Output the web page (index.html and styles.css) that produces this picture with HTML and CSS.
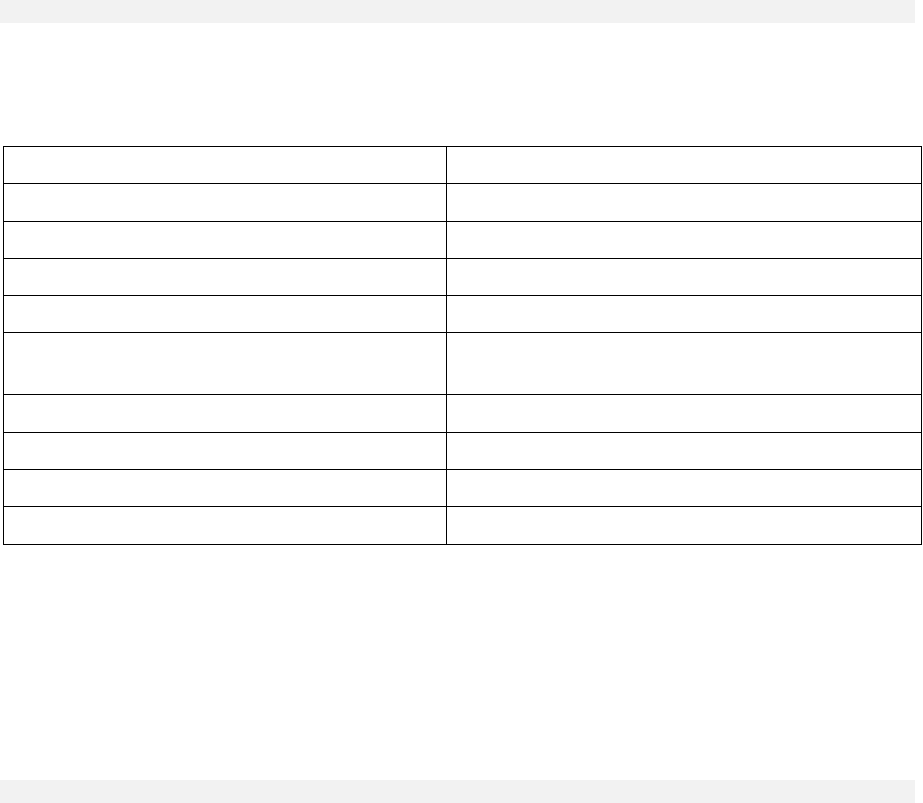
FILE: index.html
```html
<!DOCTYPE html>
<html>
<head>
<meta charset="utf-8">
<link rel="stylesheet" href="styles.css">
</head>
<body>
<div class="page">
  <header class="topbar"></header>
  <main class="content">
    <table class="grid">
      <tbody>
        <tr class="row"><td class="c1"></td><td class="c2"></td></tr>
        <tr class="row"><td class="c1"></td><td class="c2"></td></tr>
        <tr class="row"><td class="c1"></td><td class="c2"></td></tr>
        <tr class="row"><td class="c1"></td><td class="c2"></td></tr>
        <tr class="row"><td class="c1"></td><td class="c2"></td></tr>
        <tr class="row tall"><td class="c1"></td><td class="c2"></td></tr>
        <tr class="row"><td class="c1"></td><td class="c2"></td></tr>
        <tr class="row"><td class="c1"></td><td class="c2"></td></tr>
        <tr class="row"><td class="c1"></td><td class="c2"></td></tr>
        <tr class="row"><td class="c1"></td><td class="c2"></td></tr>
      </tbody>
    </table>
  </main>
  <footer class="bottombar"></footer>
</div>
</body>
</html>
```
FILE: styles.css
```css
html, body {
  margin: 0;
  padding: 0;
  background: #ffffff;
  font-family: "Liberation Sans", Arial, sans-serif;
  font-size: 14px;
}
.page {
  display: flex;
  flex-direction: column;
  min-height: 803px;
}
.topbar {
  width: 915px;
  height: 23px;
  background: #f2f2f2;
}
.content {
  padding-top: 123px;
  padding-left: 3px;
}
.grid {
  border-collapse: collapse;
  width: 919px;
  table-layout: fixed;
}
.grid td {
  border: 1px solid #000000;
  padding: 0;
}
.c1 { width: 442px; }
.row { height: 37.3px; }
.row.tall { height: 62px; }
.bottombar {
  margin-top: auto;
  width: 915px;
  height: 23px;
  background: #f2f2f2;
}
```
